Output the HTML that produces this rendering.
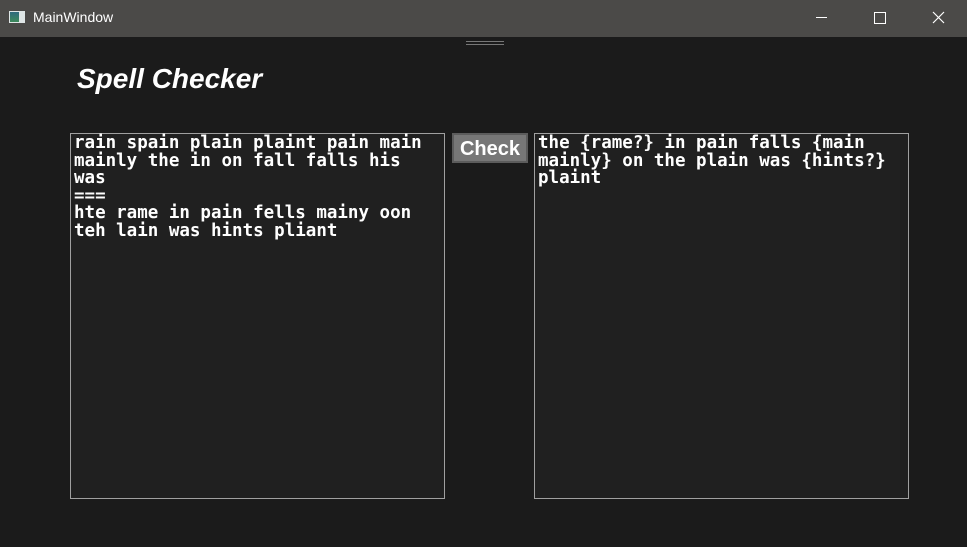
<!DOCTYPE html>
<html><head><meta charset="utf-8"><style>
html,body{margin:0;padding:0;width:967px;height:547px;overflow:hidden;background:#1b1b1b;}
.tb{position:absolute;left:0;top:0;width:967px;height:37px;background:#4b4a48;}
.tt{position:absolute;left:33px;top:9px;font:14px "Liberation Sans",sans-serif;color:#fff;}
.ic{position:absolute;left:9px;top:11px;width:16px;height:12px;background:#dfe6e6;}
.ic:before{content:"";position:absolute;left:1px;top:1px;width:9px;height:10px;background:linear-gradient(#2f6a7e,#3d8a5a);}
.grip{position:absolute;left:466px;top:41px;width:38px;height:4px;border-top:1px solid #777;border-bottom:1px solid #777;box-sizing:border-box;}
h1{position:absolute;left:77px;top:63px;margin:0;font:italic bold 28px/32px "Liberation Sans",sans-serif;color:#fff;}
.box{position:absolute;top:133px;width:375px;height:366px;box-sizing:border-box;border:1px solid #a0a0a0;background:#202020;color:#fff;font:bold 17.5px/17.5px "DejaVu Sans Mono","Liberation Mono",monospace;padding:1px 3px;white-space:pre;}
.btn{position:absolute;left:452px;top:133px;width:76px;height:30px;box-sizing:border-box;border:2px solid #5c5c5c;background:#777;color:#fff;font:bold 20px/29px "Liberation Sans",sans-serif;text-align:center;}
</style></head><body>
<div class="tb"><div class="ic"></div><div class="tt">MainWindow</div>
<svg style="position:absolute;left:800px;top:0" width="167" height="37"><path d="M16 17.5H27" stroke="#fff" stroke-width="1"/><rect x="74.5" y="12.5" width="11" height="11" fill="none" stroke="#fff"/><path d="M133 12L144 23M144 12L133 23" stroke="#fff" stroke-width="1.2"/></svg></div>
<div class="grip"></div>
<h1>Spell Checker</h1>
<div class="box" style="left:70px">rain spain plain plaint pain main
mainly the in on fall falls his
was
===
hte rame in pain fells mainy oon
teh lain was hints pliant</div>
<div class="btn">Check</div>
<div class="box" style="left:534px">the {rame?} in pain falls {main
mainly} on the plain was {hints?}
plaint</div>
</body></html>
